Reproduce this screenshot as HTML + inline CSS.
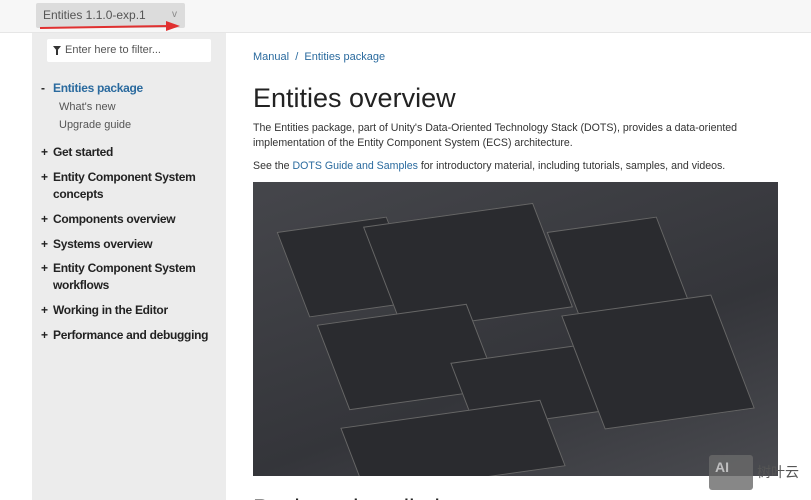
<!DOCTYPE html>
<html><head><meta charset="utf-8"><style>
*{margin:0;padding:0;box-sizing:border-box}
html,body{width:811px;height:500px;overflow:hidden}
body{background:#fff;font-family:"Liberation Sans",sans-serif;position:relative}
.top{position:absolute;left:0;top:0;width:811px;height:33px;background:#f7f7f7;border-bottom:1px solid #e6e6e6}
.dd{position:absolute;left:36px;top:3px;width:149px;height:25px;background:#dcdcdc;border-radius:2px;font-size:12px;color:#555;padding:5px 7px}
.dd span{position:absolute;right:8px;top:6px;font-size:10px;color:#888}
.side{position:absolute;left:32px;top:33px;width:194px;height:467px;background:#ececec}
.filter{position:absolute;left:47px;top:39px;width:164px;height:23px;background:#fff;border-radius:2px;font-size:11px;color:#555;padding:5px 0 0 18px}
.filter i{position:absolute;left:6px;top:7px;width:0;height:0;border-left:4px solid transparent;border-right:4px solid transparent;border-top:5px solid #333}
.filter b{position:absolute;left:9px;top:11px;width:2px;height:5px;background:#333}
.n{position:absolute;font-size:12px;font-weight:bold;color:#222;line-height:17px;letter-spacing:-0.3px}
.n em{font-style:normal;position:absolute;left:-12px}
.s{position:absolute;left:59px;font-size:11px;color:#555}
.bc{position:absolute;left:253px;top:51px;font-size:11px;color:#2a6a9e}
h1{position:absolute;left:253px;top:83px;font-size:27px;font-weight:normal;color:#222}
p{position:absolute;left:253px;font-size:10.6px;color:#333;line-height:15px;width:490px}
a{color:#2a6a9e;text-decoration:none}
.img{position:absolute;left:253px;top:182px;width:525px;height:294px;background:linear-gradient(160deg,#45464b,#34353a 60%,#4a4b50);overflow:hidden}
.pn{position:absolute;background:#2a2b2f;border:1px solid #666;transform:skewY(-8deg) skewX(20deg)}
</style></head><body>
<div class="top"></div>
<div class="dd">Entities 1.1.0-exp.1<span>v</span></div>
<svg style="position:absolute;left:38px;top:20px" width="145" height="12"><path d="M2 8 L132 6" stroke="#e03030" stroke-width="2"/><path d="M128 1 L142 6 L128 11Z" fill="#e03030"/></svg>
<div class="side"></div>
<div class="filter"><i></i><b></b>Enter here to filter...</div>
<div class="n" style="left:53px;top:80px;color:#2a6a9e"><em style="color:#222">-</em>Entities package</div>
<div class="s" style="top:101px">What's new</div>
<div class="s" style="top:119px">Upgrade guide</div>
<div class="n" style="left:53px;top:144px"><em>+</em>Get started</div>
<div class="n" style="left:53px;top:169px"><em>+</em>Entity Component System<br>concepts</div>
<div class="n" style="left:53px;top:211px"><em>+</em>Components overview</div>
<div class="n" style="left:53px;top:236px"><em>+</em>Systems overview</div>
<div class="n" style="left:53px;top:260px"><em>+</em>Entity Component System<br>workflows</div>
<div class="n" style="left:53px;top:302px"><em>+</em>Working in the Editor</div>
<div class="n" style="left:53px;top:327px"><em>+</em>Performance and debugging</div>
<div class="bc">Manual &nbsp;/&nbsp; Entities package</div>
<h1>Entities overview</h1>
<p style="top:121px">The Entities package, part of Unity's Data-Oriented Technology Stack (DOTS), provides a data-oriented implementation of the Entity Component System (ECS) architecture.</p>
<p style="top:159px">See the <a>DOTS Guide and Samples</a> for introductory material, including tutorials, samples, and videos.</p>
<div class="img">
<div class="pn" style="left:40px;top:40px;width:110px;height:90px"></div>
<div class="pn" style="left:130px;top:30px;width:170px;height:110px"></div>
<div class="pn" style="left:310px;top:40px;width:110px;height:90px"></div>
<div class="pn" style="left:80px;top:130px;width:150px;height:90px"></div>
<div class="pn" style="left:210px;top:170px;width:130px;height:70px"></div>
<div class="pn" style="left:330px;top:120px;width:150px;height:120px"></div>
<div class="pn" style="left:100px;top:230px;width:200px;height:70px"></div>
</div>
<div style="position:absolute;left:253px;top:495px;font-size:24px;color:#222">Package installation</div>
<div style="position:absolute;left:709px;top:455px;width:44px;height:35px;background:#6a6a6a;border-radius:3px;opacity:.8;color:#ddd;font-size:14px;font-weight:bold;padding:4px 6px">AI</div>
<div style="position:absolute;left:757px;top:462px;font-size:14px;color:#555;font-family:'Noto Sans CJK SC',sans-serif">树叶云</div>
</body></html>
